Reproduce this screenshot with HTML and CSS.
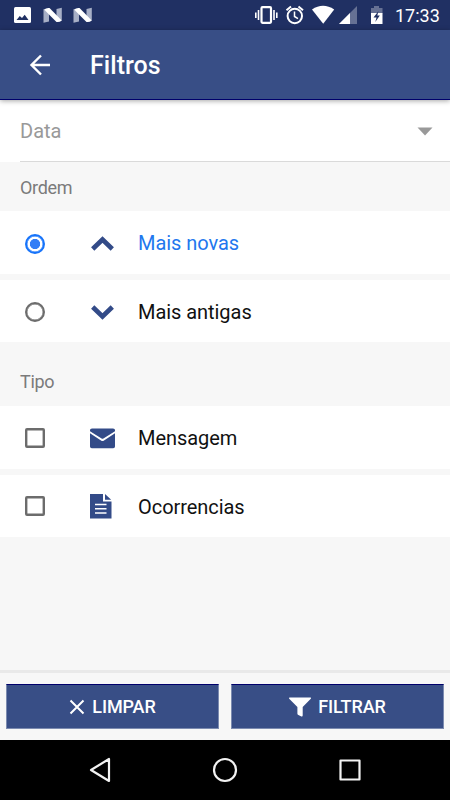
FILE: index.html
```html
<!DOCTYPE html>
<html lang="pt">
<head>
<meta charset="utf-8">
<title>Filtros</title>
<link rel="stylesheet" href="styles.css">
</head>
<body>
<div class="screen">
  <div class="status">
    <svg class="status-left" width="100" height="30" viewBox="0 0 100 30">
      <rect x="14" y="7" width="17" height="16" rx="1.500" fill="#fff"/>
      <path d="M16.500 20l3.300-4 2.200 2 2.700-3.200 3.800 5.200z" fill="#203063"/>
      <g id="n"><path d="M43.500 9l5.500 4v8.500l-5.500 1.300zM56.500 9l5.300-1.200v13L56.500 17z" fill="#a7afc6"/><path d="M44 9.500q2.500-2 5.500-1.500l12.300 12.500q-2.300 2-5.300 1.500z" fill="#fff"/></g>
      <use href="#n" x="30"/>
    </svg>
    <svg class="status-right" width="140" height="30" viewBox="250 0 140 30">
      <g fill="none" stroke="#fff">
        <rect x="261.500" y="7.200" width="9.500" height="15.600" rx="1" stroke-width="2.200"/>
        <path d="M258.500 10v10M274 10v10M255.800 12.500v5.500M276.800 12.500v5.500" stroke-width="1.600"/>
        <circle cx="294.800" cy="16" r="7.200" stroke-width="2"/>
        <path d="M294.500 11.500v5l3.500 2.200" stroke-width="1.500"/>
        <path d="M286.500 10.300l4.500-3.700M303 10.300l-4.500-3.700" stroke-width="2"/>
      </g>
      <path d="M312 9.500q11-7.500 22.200 0L323.200 23.700z" fill="#fff"/>
      <path d="M357 6v18h-18z" fill="#667194"/>
      <path d="M350 13v11h-11z" fill="#fff"/>
      <path d="M371 13.500v-5.500h3v-2h5v2h3.500v5.500z" fill="#667194"/>
      <path d="M371 13h11.500v11H371z" fill="#fff"/>
      <path d="M378.500 11l-5 6.500h3l-1.200 4.500 4.500-6.500h-2.500z" fill="#203063"/>
    </svg>
    <span class="clock">17:33</span>
  </div>
  <header class="header">
    <svg class="back" width="22" height="22" viewBox="0 0 22 22"><path d="M12 1.500L2.500 11l9.500 9.500M2.500 11H21" fill="none" stroke="#fff" stroke-width="2.400"/></svg>
    <h1 class="title">Filtros</h1>
  </header>
  <main class="content">
    <div class="select"><div class="select-inner"><span class="select-label">Data</span>
      <svg class="caret" width="16" height="9" viewBox="0 0 16 9"><path d="M.5.500h15L8 8.500z" fill="#999"/></svg></div></div>
    <div class="section order">Ordem</div>
    <div class="row first selected">
      <span class="control"><span class="radio on"></span></span>
      <span class="icon"><svg width="26" height="26" viewBox="0 0 26 26"><path d="M2.700 19L12.500 9.600 22.300 19" fill="none" stroke="#334b88" stroke-width="4.700"/></svg></span>
      <span class="label">Mais novas</span>
    </div>
    <div class="row">
      <span class="control"><span class="radio"></span></span>
      <span class="icon"><svg width="26" height="26" viewBox="0 0 26 26"><path d="M2.700 9l9.800 9.400L22.300 9" fill="none" stroke="#334b88" stroke-width="4.700"/></svg></span>
      <span class="label">Mais antigas</span>
    </div>
    <div class="section type">Tipo</div>
    <div class="row first">
      <span class="control box"><span class="check"></span></span>
      <span class="icon"><svg width="26" height="26" viewBox="0 0 26 26"><path d="M2 3.500h21q2 0 2 1.500v1.300L13 13.700q-.5.300-1 0L0 6.300V5Q0 3.500 2 3.500zM0 8.300l11 7.100q1.500 1 3 0l11-7.100V21.500q0 1.800-1.800 1.800H1.800Q0 23.300 0 21.500z" fill="#334b88"/></svg></span>
      <span class="label">Mensagem</span>
    </div>
    <div class="row">
      <span class="control box"><span class="check"></span></span>
      <span class="icon"><svg width="26" height="26" viewBox="0 0 26 26"><path d="M0 1h13v7.500h8.500v17H0zM15 1v5.800h6.200z" fill="#334b88"/><path d="M5 11.500h11.500M5 15.700h11.500M5 20h11.500" stroke="#fff" stroke-width="1.600"/></svg></span>
      <span class="label">Ocorrencias</span>
    </div>
  </main>
  <footer class="footer">
    <button class="button"><svg width="16" height="16" viewBox="0 0 16 16"><path d="M1.500 1.500l13 13M14.500 1.500l-13 13" stroke="#fff" stroke-width="2"/></svg><span>LIMPAR</span></button>
    <button class="button"><svg width="22" height="20" viewBox="0 0 22 20"><path d="M.5.500h21q1 0 .3 1.200L13.700 10v8.300q0 1.500-1.300 1.100l-3-1.300q-1-.4-1-1.300V10L.2 1.700Q-.3.500.5.500z" fill="#fff"/></svg><span>FILTRAR</span></button>
  </footer>
  <nav class="nav">
    <svg width="450" height="60" viewBox="0 0 450 60"><g fill="none" stroke="#f2f2f2" stroke-width="2.200" stroke-linejoin="round"><path d="M109 19v22L91 30z"/><circle cx="225" cy="30" r="11"/><rect x="340.500" y="20.500" width="19" height="19"/></g></svg>
  </nav>
</div>
</body>
</html>
```
FILE: styles.css
```css
* { box-sizing: border-box; }
body { margin: 0; font-family: Roboto, "Liberation Sans", sans-serif; }
.screen { width: 450px; height: 800px; display: flex; flex-direction: column; background: #f7f7f7; overflow: hidden; }
svg { display: block; flex: none; }
.status { height: 30px; background: #203063; display: flex; color: #fff; }
.status-right { margin-left: 150px; }
.clock { margin-left: 5px; font-size: 18px; line-height: 31px; }
.header { height: 70px; background: #384e86; border-bottom: 1px solid #00006b; display: flex; align-items: center; padding-left: 29px; position: relative; box-shadow: 0 1px 5px rgba(0, 0, 0, .35); color: #fff; }
.title { margin: 2px 0 0 39px; font-size: 25px; font-weight: 500; line-height: 30px; letter-spacing: .05px; }
.content { flex: 1; }
.select { height: 62px; background: #fff; padding-left: 20px; }
.select-inner { height: 62px; border-bottom: 1px solid #dadada; display: flex; align-items: center; justify-content: space-between; padding-right: 17px; }
.select-label { font-size: 20px; color: #999; }
.caret { margin-top: 2px; }
.section { padding-left: 20px; font-size: 18px; color: #7b7b7b; letter-spacing: -.3px; }
.order { height: 49px; line-height: 51px; }
.type { height: 64px; padding-top: 14px; line-height: 51px; }
.row { height: 62px; margin-top: 6px; background: #fff; display: flex; align-items: center; padding-left: 25px; color: #111; }
.row.first { margin-top: 0; height: 63px; }
.selected { color: #2277ee; }
.control { width: 65px; padding-top: 2px; }
.control.box { padding-top: 0; }
.radio { display: block; width: 20px; height: 20px; border: 2px solid #6c6c6c; box-shadow: inset 0 0 0 .4px #6c6c6c; border-radius: 50%; }
.radio.on { border-color: #1673fa; box-shadow: inset 0 0 0 .4px #1673fa; background: radial-gradient(circle, #327df6 0 4.800px, transparent 5.400px); }
.check { display: block; width: 20px; height: 20px; border: 2px solid #6c6c6c; box-shadow: inset 0 0 0 .4px #6c6c6c; border-radius: 2px; }
.icon { width: 48px; }
.label { font-size: 20px; line-height: 28px; padding-top: 2px; letter-spacing: -.05px; }
.row.first .label { padding-top: 0; }
.footer { height: 70px; border-top: 3px solid #e9e9e9; padding: 11px 6px; display: flex; gap: 12px; align-items: flex-start; }
.button { flex: 1; height: 45px; padding: 0; background: #384e86; border: 1px solid #7c8bb0; border-top-color: #00006b; color: #fff; font: 500 18px/22px Roboto, sans-serif; letter-spacing: -.1px; display: flex; justify-content: center; align-items: center; gap: 7px; }
.nav { height: 60px; background: #000; }
```
